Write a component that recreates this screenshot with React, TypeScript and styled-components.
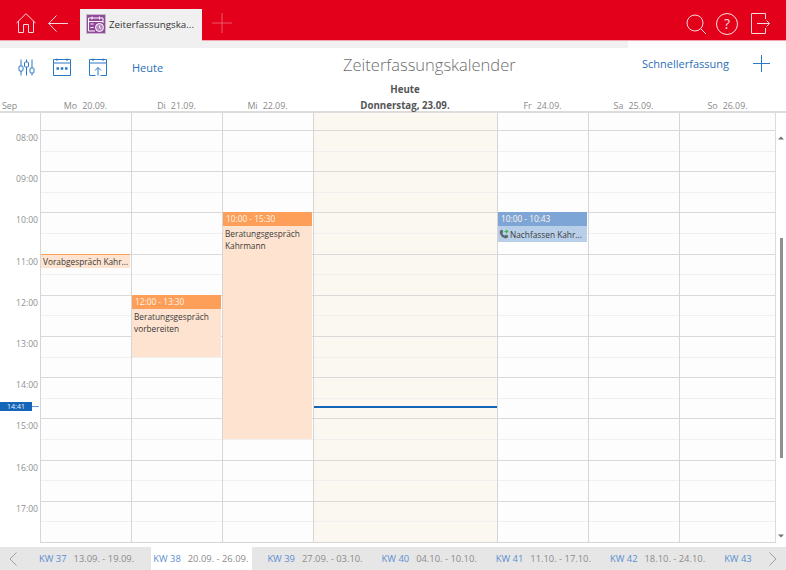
import React from "react";
import styled, { createGlobalStyle } from "styled-components";

const GlobalStyle = createGlobalStyle`
  html, body {
    margin: 0;
    padding: 0;
    background: #ffffff;
    font-family: "Open Sans", "Noto Sans", sans-serif;
    overflow: hidden;
  }
  * {
    box-sizing: border-box;
  }
`;

const hours = ["08:00", "09:00", "10:00", "11:00", "12:00", "13:00", "14:00", "15:00", "16:00", "17:00"];

const days = [
  { label: "Mo", date: "20.09.", width: 91 },
  { label: "Di", date: "21.09.", width: 91 },
  { label: "Mi", date: "22.09.", width: 91 },
  { label: "Donnerstag,", date: "23.09.", width: 184, today: true },
  { label: "Fr", date: "24.09.", width: 91 },
  { label: "Sa", date: "25.09.", width: 91 },
  { label: "So", date: "26.09.", width: 97 },
];

const weeks = [
  { kw: "KW 37", range: "13.09. - 19.09." },
  { kw: "KW 38", range: "20.09. - 26.09.", active: true },
  { kw: "KW 39", range: "27.09. - 03.10." },
  { kw: "KW 40", range: "04.10. - 10.10." },
  { kw: "KW 41", range: "11.10. - 17.10." },
  { kw: "KW 42", range: "18.10. - 24.10." },
  { kw: "KW 43", range: "" },
];

const HOUR = 41.2;
const TOP = 17;
const slotTop = (h: number) => TOP + (h - 8) * HOUR;

const App = () => {
  return (
    <Page>
      <GlobalStyle />
      <TopBar>
        <TopLeft>
          <TopIcon width="20" height="20" viewBox="0 0 20 20">
            <path d="M0.5 10 L10 0.7 L19.5 10 M2.5 8 V19.5 H7.5 V11.5 H12.5 V19.5 H17.5 V8" />
          </TopIcon>
          <TopIcon width="20" height="17" viewBox="0 0 20 17">
            <path d="M0.7 8.5 H20 M8.5 0.5 L0.7 8.5 L8.5 16.5" />
          </TopIcon>
          <Tab>
            <TabBadge>
              <svg width="18" height="18" viewBox="0 0 18 18" fill="none" stroke="#fff" strokeWidth="1">
                <path d="M1.5 3 H16 V8 M1.5 3 V16 H8 M1.5 6.5 H16" />
                <path d="M5 1.5 V4.5 M12.5 1.5 V4.5 M3.5 9 H6.5 M3.5 12.5 H6.5" />
                <circle cx="12.5" cy="12.5" r="4" fill="#fff" fillOpacity="0.35" />
                <path d="M12.5 10.5 V12.5 L14 13.5" />
              </svg>
            </TabBadge>
            <TabText>Zeiterfassungska...</TabText>
          </Tab>
          <TopIcon width="20" height="20" viewBox="0 0 20 20" $dim>
            <path d="M10 0 V20 M0 10 H20" />
          </TopIcon>
        </TopLeft>
        <TopRight>
          <TopIcon width="20" height="20" viewBox="0 0 20 20">
            <circle cx="9" cy="9" r="8" />
            <path d="M14.5 14.5 L20 20" />
          </TopIcon>
          <HelpCircle>?</HelpCircle>
          <ExitIcon width="19" height="21" viewBox="0 0 19 21">
            <path d="M14.5 6 V0.5 H0.5 V20.5 H14.5 V15 M6 10.5 H18.5 M15.5 7.5 L18.5 10.5 L15.5 13.5" />
          </ExitIcon>
        </TopRight>
      </TopBar>
      <GreyStrip />
      <Toolbar>
        <ToolGroup>
          <ToolIcon width="17" height="17" viewBox="0 0 17 17">
            <path d="M3 0.5 V7 M3 12 V16.5 M8.5 0.5 V3 M8.5 8 V16.5 M14 0.5 V9 M14 14 V16.5" />
            <rect x="1" y="7" width="4" height="5" rx="1" />
            <rect x="6.5" y="3" width="4" height="5" rx="1" />
            <rect x="12" y="9" width="4" height="5" rx="1" />
          </ToolIcon>
          <ToolIcon width="18" height="18" viewBox="0 0 18 18">
            <path d="M0.5 1.5 H17.5 V17.5 H0.5 Z M0.5 5 H17.5 M4 0.5 V3 M14 0.5 V3" />
            <path d="M3.5 10.5 H6 M7.7 10.5 H10.3 M12 10.5 H14.5" strokeWidth="2.4" />
          </ToolIcon>
          <ToolIcon width="18" height="18" viewBox="0 0 18 18">
            <path d="M11.5 17.5 H17.5 V1.5 H0.5 V17.5 H6.5 M0.5 5 H17.5 M4 0.5 V3 M14 0.5 V3" />
            <path d="M9 17.5 V9.5 M6 12.5 L9 9.5 L12 12.5" />
          </ToolIcon>
          <TodayLink>Heute</TodayLink>
        </ToolGroup>
        <Title>Zeiterfassungskalender</Title>
        <ToolRight>
          <QuickLink>Schnellerfassung</QuickLink>
          <ToolIcon width="17" height="17" viewBox="0 0 17 17">
            <path d="M8.5 0 V17 M0 8.5 H17" />
          </ToolIcon>
        </ToolRight>
      </Toolbar>
      <HeadRow>
        <MonthCell>Sep</MonthCell>
        {days.map((d) =>
          d.today ? (
            <TodayHead key={d.date} style={{ width: d.width }}>
              <strong>Heute</strong>
              <strong>Donnerstag, 23.09.</strong>
            </TodayHead>
          ) : (
            <DayHead key={d.date} style={{ width: d.width }}>
              <span>{d.label}</span>
              <span>{d.date}</span>
            </DayHead>
          )
        )}
      </HeadRow>
      <Body>
        <Gutter>
          <TopSlot />
          {hours.map((h) => (
            <GutterHour key={h}>{h}</GutterHour>
          ))}
          <NowBadge>14:41</NowBadge>
          <NowTick />
        </Gutter>
        {days.map((d, i) => (
          <DayColumn key={d.date} $today={d.today} $last={i === days.length - 1} style={{ width: d.width }}>
            <TopSlot />
            {hours.map((h) => (
              <HourCell key={h}>
                <HalfCell />
              </HourCell>
            ))}
            {i === 0 && (
              <PlainEvent style={{ top: slotTop(11) }}>
                <EventLine>Vorabgespräch Kahr...</EventLine>
              </PlainEvent>
            )}
            {i === 1 && (
              <Event style={{ top: slotTop(12), height: HOUR * 1.5 }}>
                <EventHead>12:00 - 13:30</EventHead>
                <EventText>
                  Beratungsgespräch
                  <br />
                  vorbereiten
                </EventText>
              </Event>
            )}
            {i === 2 && (
              <Event style={{ top: slotTop(10), height: HOUR * 5.5 }}>
                <EventHead>10:00 - 15:30</EventHead>
                <EventText>
                  Beratungsgespräch
                  <br />
                  Kahrmann
                </EventText>
              </Event>
            )}
            {d.today && <NowLine style={{ top: slotTop(14) + (HOUR * 41) / 60 + 1 }} />}
            {i === 4 && (
              <Event $blue style={{ top: slotTop(10), height: 30 }}>
                <EventHead $blue>10:00 - 10:43</EventHead>
                <CallRow>
                  <CallIcon width="10" height="10" viewBox="0 0 12 12">
                    <path
                      d="M2.5 1 L4.5 1.5 L5 4 L4 5 C4.5 6.5 5.5 7.5 7 8 L8 7 L10.5 7.5 L11 9.5 C10 11 8.5 11.5 7 11 C4 10 2 8 1 5 C0.7 3.5 1.2 2 2.5 1 Z"
                      fill="#5d6a6a"
                    />
                    <path d="M6.5 3 H10 M8.5 1.2 L10.5 3 L8.5 4.8" fill="none" stroke="#3db54a" strokeWidth="1.3" />
                  </CallIcon>
                  <EventLine>Nachfassen Kahr...</EventLine>
                </CallRow>
              </Event>
            )}
          </DayColumn>
        ))}
        <ScrollBar>
          <Arrow viewBox="0 0 8 8" width="8" height="8">
            <path d="M1 5.5 L4 2.5 L7 5.5 Z" fill="#707070" />
          </Arrow>
          <ScrollTrack>
            <ScrollThumb />
          </ScrollTrack>
          <Arrow viewBox="0 0 8 8" width="8" height="8">
            <path d="M1 2.5 L4 5.5 L7 2.5 Z" fill="#707070" />
          </Arrow>
        </ScrollBar>
      </Body>
      <WeekBar>
        <Chevron width="8" height="14" viewBox="0 0 8 14">
          <path d="M7.5 0.5 L1 7 L7.5 13.5" />
        </Chevron>
        {weeks.map((w) => (
          <WeekItem key={w.kw} $active={w.active}>
            <WeekNo>{w.kw}</WeekNo>
            {w.range && <WeekRange>{w.range}</WeekRange>}
          </WeekItem>
        ))}
        <ChevronRight width="8" height="14" viewBox="0 0 8 14">
          <path d="M0.5 0.5 L7 7 L0.5 13.5" />
        </ChevronRight>
      </WeekBar>
    </Page>
  );
};

const Page = styled.div`
  width: 786px;
  height: 570px;
  display: flex;
  flex-direction: column;
  overflow: hidden;
  background: #fff;
`;

const TopBar = styled.header`
  height: 41px;
  flex: none;
  background: #e2001a;
  border-bottom: 1px solid #f6a3ad;
  display: flex;
  justify-content: space-between;
  padding: 0 16px;
`;

const TopLeft = styled.div`
  display: flex;
  align-items: center;
  height: 100%;
  padding-top: 6px;
  gap: 12px;
`;

const TopRight = styled.div`
  display: flex;
  align-items: center;
  height: 100%;
  padding-top: 7px;
  gap: 10px;
`;

const TopIcon = styled.svg<{ $dim?: boolean }>`
  fill: none;
  stroke: #ffffff;
  stroke-width: 1;
  flex: none;
  opacity: ${(p) => (p.$dim ? 0.35 : 0.85)};
`;

const ExitIcon = styled(TopIcon)`
  margin-left: 3px;
`;

const HelpCircle = styled.div`
  width: 22px;
  height: 22px;
  border: 1px solid rgba(255, 255, 255, 0.88);
  border-radius: 50%;
  color: rgba(255, 255, 255, 0.88);
  font-size: 14px;
  line-height: 20px;
  text-align: center;
`;

const Tab = styled.div`
  width: 122px;
  height: 32px;
  align-self: flex-end;
  margin-bottom: -1px;
  margin-right: -2px;
  background: #f0f0f0;
  display: flex;
  align-items: center;
  padding: 0 0 2px 6px;
  gap: 3px;
`;

const TabBadge = styled.div`
  width: 20px;
  height: 20px;
  flex: none;
  background: #93479b;
  border: 1px solid #c3b8cc;
  display: flex;
  align-items: center;
  justify-content: center;
`;

const TabText = styled.span`
  font-size: 9.8px;
  color: #333;
  white-space: nowrap;
`;

const GreyStrip = styled.div`
  height: 7px;
  flex: none;
  background: linear-gradient(to right, #f0f0f0 628px, #fcfcfc 628px);
`;

const Toolbar = styled.div`
  height: 34px;
  flex: none;
  position: relative;
  display: flex;
  align-items: center;
  justify-content: space-between;
  padding: 0 16px 0 18px;
`;

const ToolGroup = styled.div`
  display: flex;
  align-items: center;
  gap: 18px;
  margin-top: 4px;
`;

const ToolIcon = styled.svg`
  fill: none;
  stroke: #2a79c6;
  stroke-width: 1;
  flex: none;
`;

const TodayLink = styled.span`
  font-size: 11px;
  color: #2a6fb8;
  margin-left: 7px;
`;

const Title = styled.div`
  position: absolute;
  left: 343px;
  top: 5px;
  font-size: 16.5px;
  font-weight: 300;
  color: #6e6e6e;
  white-space: nowrap;
`;

const ToolRight = styled.div`
  display: flex;
  align-items: center;
  gap: 24px;
  margin-top: -3px;
`;

const QuickLink = styled.span`
  font-size: 11px;
  color: #2a6fb8;
`;

const HeadRow = styled.div`
  height: 31px;
  flex: none;
  display: flex;
  align-items: flex-end;
  border-bottom: 2px solid #dcdcdc;
  font-size: 8.9px;
  color: #8a8a8a;
`;

const MonthCell = styled.div`
  width: 40px;
  flex: none;
  padding-left: 2px;
  line-height: 13px;
  margin-bottom: -1px;
`;

const DayHead = styled.div`
  flex: none;
  display: flex;
  justify-content: center;
  gap: 5px;
  line-height: 13px;
  margin-bottom: -1px;
`;

const TodayHead = styled.div`
  flex: none;
  display: flex;
  flex-direction: column;
  align-items: center;
  gap: 3px;
  line-height: 13px;
  margin-bottom: -1px;
  font-size: 9.7px;
  color: #555;
  strong {
    font-weight: 700;
  }
`;

const Body = styled.div`
  height: 430px;
  flex: none;
  display: flex;
  background: #fdfdfd;
`;

const Gutter = styled.div`
  width: 40px;
  flex: none;
  position: relative;
  background: #fff;
`;

const TopSlot = styled.div`
  height: 17px;
`;

const GutterHour = styled.div`
  height: 41.2px;
  font-size: 8.6px;
  line-height: 12px;
  color: #8f8f8f;
  text-align: right;
  padding: 2px 2px 0 0;
`;

const NowBadge = styled.div`
  position: absolute;
  left: 0;
  top: 289px;
  width: 32px;
  height: 9px;
  background: #1465b8;
  color: #e8f0fa;
  font-size: 7px;
  line-height: 9px;
  text-align: center;
`;

const NowTick = styled.div`
  position: absolute;
  left: 32px;
  top: 293px;
  width: 7px;
  height: 1px;
  background: #5a9ad8;
`;

const DayColumn = styled.div<{ $today?: boolean; $last?: boolean }>`
  flex: none;
  position: relative;
  overflow: hidden;
  border-left: 1px solid #d6d6d6;
  border-right: ${(p) => (p.$last ? "1px solid #dcdcdc" : "none")};
  border-bottom: 1px solid #d6d6d6;
  background: ${(p) => (p.$today ? "#fbf8f1" : "transparent")};
`;

const HourCell = styled.div`
  height: 41.2px;
  border-top: 1px solid #d9d9d9;
`;

const HalfCell = styled.div`
  height: 20.6px;
  border-bottom: 1px solid #f0f0f0;
`;

const Event = styled.div<{ $blue?: boolean }>`
  position: absolute;
  left: 0;
  width: 89px;
  background: ${(p) => (p.$blue ? "#b8cfe9" : "#fee3d0")};
  color: #3a3a3a;
  font-size: 8.3px;
`;

const PlainEvent = styled.div`
  position: absolute;
  left: 0;
  width: 89px;
  height: 14px;
  background: #fee3d0;
  border-top: 1px solid #f7a15c;
  color: #3a3a3a;
  font-size: 8.3px;
  padding-left: 2px;
`;

const EventHead = styled.div<{ $blue?: boolean }>`
  height: 14px;
  background: ${(p) => (p.$blue ? "#7da6d6" : "#fd9f58")};
  color: #fff4ea;
  line-height: 14px;
  padding-left: 3px;
`;

const EventText = styled.div`
  padding: 2px 0 0 2px;
  line-height: 12px;
`;

const EventLine = styled.div`
  line-height: 13px;
  white-space: nowrap;
`;

const CallRow = styled.div`
  display: flex;
  align-items: center;
  gap: 1px;
  height: 16px;
  padding-left: 1px;
`;

const CallIcon = styled.svg`
  flex: none;
`;

const NowLine = styled.div`
  position: absolute;
  left: 0;
  right: 0;
  height: 2px;
  background: #1465b8;
`;

const ScrollBar = styled.div`
  flex: 1;
  display: flex;
  flex-direction: column;
  align-items: center;
  padding: 21px 0 3px;
  background: #fff;
`;

const Arrow = styled.svg`
  flex: none;
`;

const ScrollTrack = styled.div`
  flex: 1;
  width: 100%;
  display: flex;
  justify-content: center;
`;

const ScrollThumb = styled.div`
  width: 3px;
  height: 220px;
  margin-top: 96px;
  background: #8f8f8f;
`;

const WeekBar = styled.div`
  flex: 1;
  margin-top: 4px;
  display: flex;
  align-items: center;
  background: #e6e6e6;
  font-size: 9.4px;
  padding-left: 9px;
`;

const Chevron = styled.svg`
  fill: none;
  stroke: #a0a0a0;
  stroke-width: 1;
  flex: none;
  margin-right: 20px;
`;

const ChevronRight = styled(Chevron)`
  margin: 0 9px 0 auto;
`;

const WeekItem = styled.div<{ $active?: boolean }>`
  height: 100%;
  width: 101px;
  margin-right: 13.2px;
  flex: none;
  display: flex;
  align-items: center;
  gap: 7px;
  padding-left: 2px;
  background: ${(p) => (p.$active ? "#fff" : "transparent")};
  &:nth-last-child(2) {
    width: 40px;
    margin-right: 0;
  }
`;

const WeekNo = styled.span`
  color: #5b8fd0;
  white-space: nowrap;
`;

const WeekRange = styled.span`
  color: #8c8c8c;
  white-space: nowrap;
`;

export default App;
